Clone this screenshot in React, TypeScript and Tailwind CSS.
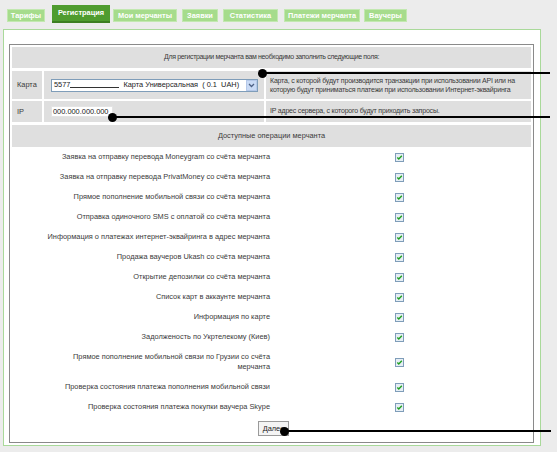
import React from "react";

// label, width, left offset from previous tab
const tabs: [string, number, number][] = [
  ["Тарифы", 38, 7],
  ["Регистрация", 58, 7],
  ["Мои мерчанты", 64, 3],
  ["Заявки", 36, 5],
  ["Статистика", 55, 5],
  ["Платежи мерчанта", 76, 6],
  ["Ваучеры", 43, 4],
];

// operations available to the merchant (all checked)
const operations: React.ReactNode[] = [
  "Заявка на отправку перевода Moneygram со счёта мерчанта",
  "Заявка на отправку перевода PrivatMoney со счёта мерчанта",
  "Прямое пополнение мобильной связи со счёта мерчанта",
  "Отправка одиночного SMS с оплатой со счёта мерчанта",
  "Информация о платежах интернет-эквайринга в адрес мерчанта",
  "Продажа ваучеров Ukash со счёта мерчанта",
  "Открытие депозилки со счёта мерчанта",
  "Список карт в аккаунте мерчанта",
  "Информация по карте",
  "Задолженость по Укртелекому (Киев)",
  <>
    Прямое пополнение мобильной связи по Грузии со счёта
    <br />
    мерчанта
  </>,
  "Проверка состояния платежа пополнения мобильной связи",
  "Проверка состояния платежа покупки ваучера Skype",
];

const CheckBox = () => (
  <svg width="9" height="9" viewBox="0 0 9 9">
    <rect x="0.5" y="0.5" width="8" height="8" fill="#e6eef5" stroke="#7f9db9" />
    <path d="M2.3 4.4 L3.8 6 L6.8 2.8" fill="none" stroke="#21a121" strokeWidth="1.4" />
  </svg>
);

const Dot = ({ x, y }: { x: number; y: number }) => (
  <div
    className="absolute w-[9px] h-[9px] rounded-full bg-black"
    style={{ left: x - 4.5, top: y - 4.5 }}
  />
);

const Line = ({ x, y, to }: { x: number; y: number; to: number }) => (
  <div
    className="absolute h-[1.5px] bg-black"
    style={{ left: x, top: y - 0.75, width: to - x }}
  />
);

export default function App() {
  return (
    <div
      className="relative w-[557px] h-[452px] overflow-hidden bg-[#ececec] text-[7.4px] text-[#3a3a3a]"
      style={{ fontFamily: '"Liberation Sans", Arial, sans-serif' }}
    >
      {/* tabs */}
      <div className="flex items-start pt-[5px] h-[29px]">
        {tabs.map(([t, w, ml]) =>
          t === "Регистрация" ? (
            <div
              key={t}
              style={{ width: w, marginLeft: ml }}
              className="h-[18px] flex items-center justify-center bg-[#4f9c2f] border-b-2 border-[#3d7f22] text-white font-bold whitespace-nowrap"
            >
              {t}
            </div>
          ) : (
            <div
              key={t}
              style={{ width: w, marginLeft: ml }}
              className="mt-[4px] h-[13px] flex items-center justify-center bg-[#a6dc8c] border border-[#c2e8b0] text-white font-bold whitespace-nowrap"
            >
              {t}
            </div>
          )
        )}
      </div>

      {/* panel */}
      <div className="ml-[3px] w-[538px] h-[417px] bg-white border border-[#a9d99a] pl-[5px] pt-[14px]">
        <div className="w-[525px] h-[399px] border border-[#8a8a8a] p-[2px] flex flex-col">
          <div className="h-[21px] shrink-0 bg-[#dfdfdf] flex items-center justify-center text-[7px] tracking-[-0.35px]">
            Для регистрации мерчанта вам необходимо заполнить следующие поля:
          </div>

          <div className="mt-[3px] h-[28px] shrink-0 grid grid-cols-[30px_220px_1fr] gap-[2px]">
            <div className="bg-[#dfdfdf] flex items-center pl-[5px]">Карта</div>
            <div className="bg-[#dfdfdf] flex items-center pl-[7px]">
              <div className="w-[207px] h-[13px] bg-white border border-[#7f9db9] flex items-center pl-[2px] text-[#222] whitespace-nowrap">
                <span>5577</span>
                <span className="inline-block w-[49px] h-[6px] border-b border-[#333] mr-[4px]" />
                <span className="flex-1">Карта Универсальная&nbsp; ( 0.1&nbsp; UAH)</span>
                <span className="w-[11px] h-[11px] bg-[#c9daf5] border border-[#b5c8e8] flex items-center justify-center">
                  <svg width="7" height="5" viewBox="0 0 7 5">
                    <path d="M1 1 L3.5 3.5 L6 1" fill="none" stroke="#4d6185" strokeWidth="1.3" />
                  </svg>
                </span>
              </div>
            </div>
            <div className="bg-[#dfdfdf] flex flex-col justify-center pl-[4px] leading-[9px] whitespace-nowrap text-[7px] tracking-[-0.2px]">
              <span>Карта, с которой будут производится транзакции при использовании API или на</span>
              <span>которую будут приниматься платежи при использовании Интернет-эквайринга</span>
            </div>
          </div>

          <div className="mt-[2px] h-[21px] shrink-0 grid grid-cols-[30px_220px_1fr] gap-[2px]">
            <div className="bg-[#dfdfdf] flex items-center pl-[5px]">IP</div>
            <div className="bg-[#dfdfdf] flex items-center pl-[7px]">
              <div className="w-[62px] h-[11px] bg-white border border-[#e4e4e4] flex items-center pl-[1px] text-[#222]">
                000.000.000.000
              </div>
            </div>
            <div className="bg-[#dfdfdf] flex items-center pl-[4px] text-[7px] tracking-[-0.2px]">
              IP адрес сервера, с которого будут приходить запросы.
            </div>
          </div>

          <div className="mt-[3px] h-[22px] shrink-0 bg-[#dfdfdf] flex items-center justify-center">
            Доступные операции мерчанта
          </div>

          {operations.map((op, i) => (
            <div
              key={i}
              className={`grid grid-cols-[260px_1fr] shrink-0 ${i === 10 ? "h-[30px]" : "h-[20px]"}`}
            >
              <div className="flex items-center justify-end text-right pr-[2px] leading-[10px]">
                {op}
              </div>
              <div className="flex items-center justify-center pr-[5px]">
                <CheckBox />
              </div>
            </div>
          ))}

          <div className="h-[23px] shrink-0 flex items-center justify-center">
            <button className="ml-[4px] h-[15px] px-[4px] bg-[#f4f4f4] border border-[#9a9a9a] text-[7.4px] text-[#222]">
              Далее
            </button>
          </div>
        </div>
      </div>

      {/* annotation markers */}
      <Line x={262} y={73} to={550} />
      <Dot x={262} y={73} />
      <Line x={112} y={117} to={550} />
      <Dot x={112} y={117} />
      <Line x={284} y={431} to={551} />
      <Dot x={284} y={431} />
    </div>
  );
}
